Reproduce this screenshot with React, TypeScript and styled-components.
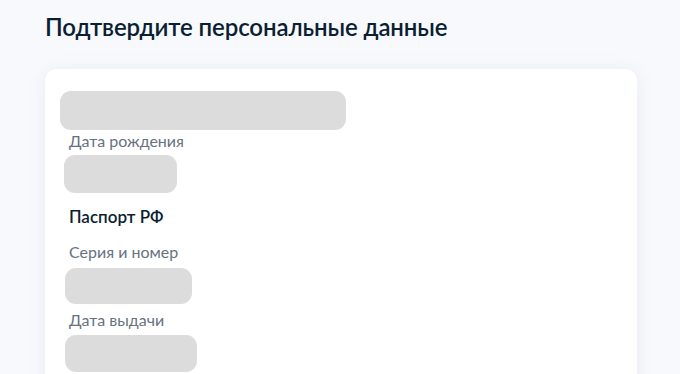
import React from 'react';
import styled, { createGlobalStyle } from 'styled-components';

const GlobalStyle = createGlobalStyle`
  html, body {
    margin: 0;
    padding: 0;
    background: #f7f9fc;
    font-family: Lato, "Noto Sans", sans-serif;
  }
`;

const Page = styled.div`
  display: flex;
  flex-direction: column;
  padding: 11px 43px 0 45px;
  height: 374px;
  box-sizing: border-box;
  overflow: hidden;
`;

const Title = styled.h1`
  margin: 0;
  font-size: 24px;
  line-height: 32px;
  font-weight: 600;
  color: #0b1f33;
  letter-spacing: -0.1px;
`;

const Card = styled.div`
  margin-top: 26px;
  background: #ffffff;
  border-radius: 12px;
  box-shadow: 0 2px 16px rgba(186, 196, 214, 0.25);
  padding: 22px 0 40px 0;
  display: flex;
  flex-direction: column;
  align-items: flex-start;
  flex-shrink: 0;
`;

const Skeleton = styled.div<{ $left: number; $width: number; $height: number; $top: number }>`
  margin-left: ${(p) => p.$left}px;
  margin-top: ${(p) => p.$top}px;
  width: ${(p) => p.$width}px;
  height: ${(p) => p.$height}px;
  border-radius: 11px;
  background: #dcdcdc;
  flex-shrink: 0;
`;

const Label = styled.div<{ $top: number }>`
  margin: ${(p) => p.$top}px 0 0 24px;
  font-size: 16px;
  line-height: 20px;
  color: #66727f;
`;

const Section = styled.div`
  margin: 12px 0 0 24px;
  font-size: 17px;
  line-height: 24px;
  font-weight: 600;
  color: #0b1f33;
`;

export default function App() {
  return (
    <>
      <GlobalStyle />
      <Page>
        <Title>Подтвердите персональные данные</Title>
        <Card>
          <Skeleton $left={15} $top={0} $width={286} $height={39} />
          <Label $top={1}>Дата рождения</Label>
          <Skeleton $left={19} $top={4} $width={113} $height={38} />
          <Section>Паспорт РФ</Section>
          <Label $top={13}>Серия и номер</Label>
          <Skeleton $left={20} $top={6} $width={127} $height={36} />
          <Label $top={6}>Дата выдачи</Label>
          <Skeleton $left={20} $top={5} $width={132} $height={37} />
        </Card>
      </Page>
    </>
  );
}
